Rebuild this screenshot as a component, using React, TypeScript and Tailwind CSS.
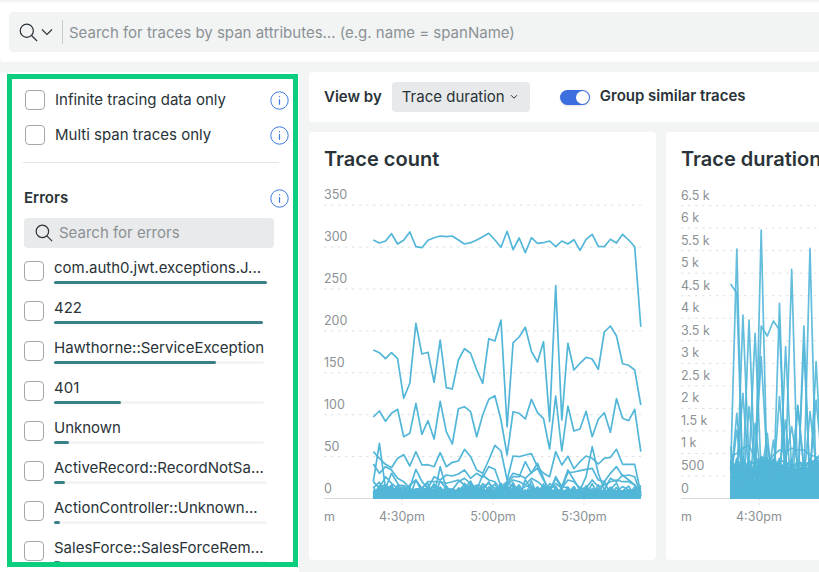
import {ReactNode} from 'react';

const LINE = '#52b6d8';

// deterministic noise so the low chart lines never change between runs
function makeRandom(seed: number) {
    let s = seed;
    return () => {
        s = (s * 1664525 + 1013904223) % 4294967296;
        return s / 4294967296;
    };
}

const COUNT_X0 = 373.3;
const COUNT_STEP = 6.08;

const countTop = [180, 189, 183, 161, 192, 181, 156, 200, 203, 181, 173, 168, 170, 168, 180, 192, 188, 180, 170, 160, 180, 202, 154, 209, 174, 218, 173, 190, 188, 183, 200, 183, 192, 179, 211, 178, 163, 199, 200, 178, 189, 163, 180, 200, 440];
const countSecond = [510, 518, 536, 518, 536, 655, 610, 430, 522, 517, 607, 480, 623, 627, 540, 506, 520, 570, 610, 476, 483, 420, 740, 488, 471, 442, 514, 546, 485, 725, 317, 720, 490, 570, 550, 532, 537, 568, 456, 438, 468, 551, 556, 570, 675];
const countThird = [711, 693, 724, 700, 688, 770, 760, 670, 763, 722, 777, 664, 755, 792, 686, 680, 695, 770, 705, 658, 647, 720, 825, 695, 700, 717, 658, 698, 716, 807, 648, 813, 678, 753, 747, 694, 770, 718, 698, 757, 656, 715, 722, 688, 815];
const countFourth = [815, 835, 853, 863, 835, 824, 858, 815, 855, 854, 860, 818, 860, 847, 843, 808, 830, 870, 880, 840, 796, 813, 900, 828, 830, 825, 821, 860, 880, 890, 815, 855, 829, 866, 845, 828, 835, 852, 835, 832, 808, 853, 853, 853, 940];
const countFifth = [852, 880, 860, 870, 895, 905, 925, 868, 905, 925, 890, 900, 885, 888, 882, 870, 895, 880, 892, 860, 868, 920, 905, 880, 885, 895, 878, 865, 900, 930, 895, 925, 878, 876, 872, 868, 865, 900, 905, 880, 860, 888, 885, 890, 945];
const countSpikes = [905, 790, 925, 880, 910, 940, 950, 900, 935, 920, 945, 860, 925, 930, 905, 895, 910, 930, 885, 900, 905, 930, 910, 890, 890, 845, 880, 850, 895, 940, 890, 920, 870, 900, 930, 890, 800, 880, 930, 895, 905, 885, 900, 915, 940];
const countLow = [905, 925, 890, 910, 925, 935, 915, 900, 925, 905, 905, 905, 910, 905, 900, 915, 925, 915, 920, 910, 925, 930, 915, 900, 905, 915, 895, 905, 920, 930, 910, 925, 900, 905, 925, 925, 900, 920, 915, 905, 900, 905, 905, 915, 950];

function countPoints(values: number[]) {
    return values.map((y, i) => `${(COUNT_X0 + i * COUNT_STEP).toFixed(1)},${(180 + y / 3).toFixed(1)}`).join(' ');
}

const countNoise = (() => {
    const rand = makeRandom(11);
    return Array.from({length: 30}, (_, n) => {
        const high = 15 - n * 0.35;
        return Array.from({length: 45}, (_, i) => {
            const x = COUNT_X0 + i * COUNT_STEP;
            const y = 497 - rand() * rand() * high * 1.3;
            return `${x.toFixed(1)},${y.toFixed(1)}`;
        }).join(' ');
    });
})();

const DURATION_X0 = 730.7;
const DURATION_STEP = 6.1;

function durationPoints(values: number[]) {
    return values.map((y, i) => `${(DURATION_X0 + i * DURATION_STEP).toFixed(1)},${(140 + y / 3).toFixed(1)}`).join(' ');
}

const durationSpikes: [number, number][] = [
    [1, 327], [2, 525], [3, 540], [4, 580], [5, 270], [8, 490], [9, 620], [10, 388], [12, 558], [13, 325], [14, 665], [15, 930],
    [1, 820], [2, 760], [3, 800], [5, 650], [6, 880], [8, 770], [9, 840], [10, 860], [11, 800], [12, 620], [13, 815], [11, 795], [14, 780],
    [0, 920], [1, 870], [4, 850], [7, 900], [6, 910],
];

const durationLines = (() => {
    const rand = makeRandom(29);
    const lines: number[][] = [];
    durationSpikes.forEach(([at, top]) => {
        lines.push(Array.from({length: 17}, (_, i) => (i === at ? top : 960 + rand() * 115)));
    });
    lines.push([432, 460, 1040, 980, 1050, 1000, 1020, 980, 1040, 1000, 1030, 1000, 1050, 1000, 1040, 1000, 1040]);
    lines.push([1040, 1000, 1050, 1020, 1000, 558, 588, 543, 570, 1000, 1040, 1000, 1020, 1040, 1000, 1030, 1040]);
    lines.push([950, 940, 925, 915, 955, 960, 975, 945, 930, 935, 925, 930, 930, 945, 950, 960, 950]);
    return lines;
})();

const durationNoise = (() => {
    const rand = makeRandom(53);
    return Array.from({length: 22}, () =>
        Array.from({length: 17}, () => 1075 - rand() * 125),
    );
})();

const countTicks = ['0', '50', '100', '150', '200', '250', '300', '350'];
const durationTicks = ['0', '500', '1 k', '1.5 k', '2 k', '2.5 k', '3 k', '3.5 k', '4 k', '4.5 k', '5 k', '5.5 k', '6 k', '6.5 k'];

function Axis({ticks, x0, x1, step, times}: {
    ticks: string[],
    x0: number,
    x1: number,
    step: number,
    times: [string, number][]
}) {
    return (
        <g className="text-[12.5px]" fill="#8b9194">
            {ticks.map((t, i) => {
                const y = 498.5 - i * step;
                return (
                    <g key={t}>
                        {i > 0 && <line x1={x0} x2={x1} y1={y} y2={y} stroke="#dedfe0" strokeDasharray="2.5 4.5"/>}
                        <text x={x0} y={y - 6}>{t}</text>
                    </g>
                );
            })}
            <line x1={x0} x2={x1} y1={498.5} y2={498.5} stroke="#d9dadb"/>
            <text x={x0} y={521}>m</text>
            {times.map(([label, x]) => (
                <g key={label}>
                    <line x1={x} x2={x} y1={499} y2={505} stroke="#dedfe0" strokeDasharray="2 2"/>
                    <text x={x} y={521} textAnchor="middle">{label}</text>
                </g>
            ))}
        </g>
    );
}

function CountChart() {
    return (
        <svg viewBox="309 180 347 350" className="block h-[350px] w-[347px]">
            <Axis ticks={countTicks} x0={324} x1={641} step={41.9}
                  times={[['4:30pm', 402], ['5:00pm', 493], ['5:30pm', 584]]}/>
            <g fill="none" stroke={LINE} strokeWidth="1.7" strokeLinejoin="round">
                {[countTop, countSecond, countThird, countFourth, countFifth, countSpikes, countLow].map((values, i) => (
                    <polyline key={i} points={countPoints(values)}/>
                ))}
                {countNoise.map((points, i) => (
                    <polyline key={i} points={points}/>
                ))}
            </g>
            <rect x={373} y={490} width={268} height={9} fill={LINE}/>
        </svg>
    );
}

function DurationChart() {
    return (
        <svg viewBox="666 180 347 350" className="block h-[350px] w-[347px]">
            <Axis ticks={durationTicks} x0={681} x1={1000} step={22.53} times={[['4:30pm', 759]]}/>
            <g fill="none" stroke={LINE} strokeWidth="1.7" strokeLinejoin="round">
                {durationLines.map((values, i) => (
                    <polyline key={i} points={durationPoints(values)} opacity={0.9}/>
                ))}
                {durationNoise.map((values, i) => (
                    <polyline key={i} points={durationPoints(values)}/>
                ))}
            </g>
            <rect x={730} y={482} width={110} height={17} fill={LINE}/>
        </svg>
    );
}

function SearchIcon({className}: { className: string }) {
    return (
        <svg viewBox="0 0 20 20" fill="none" stroke="#293338" strokeWidth="1.3" className={className}>
            <circle cx="8.2" cy="8.2" r="6.9"/>
            <path d="M13.2 13.2 19 19"/>
        </svg>
    );
}

function InfoIcon() {
    return (
        <svg viewBox="0 0 19 19" fill="none" stroke="#3b78e0" className="h-[19px] w-[19px] shrink-0">
            <circle cx="9.5" cy="9.5" r="8.7"/>
            <path d="M9.5 8.2v5.6" strokeWidth="1.2"/>
            <path d="M9.5 5.2v1.2" strokeWidth="1.2"/>
        </svg>
    );
}

function Box({className = ''}: { className?: string }) {
    return <span className={`block h-5 w-5 shrink-0 rounded-[4px] border border-[#a3a7a9] bg-white ${className}`}/>;
}

function OptionRow({children}: { children: ReactNode }) {
    return (
        <div className="flex h-5 items-center">
            <Box/>
            <span className="ml-[10px] w-[215px] text-[15px] text-[#293338]">{children}</span>
            <InfoIcon/>
        </div>
    );
}

const errorRows = [
    {name: 'com.auth0.jwt.exceptions.J...', track: 213, fill: 213},
    {name: '422', track: 209, fill: 209},
    {name: 'Hawthorne::ServiceException', track: 210, fill: 162},
    {name: '401', track: 210, fill: 67},
    {name: 'Unknown', track: 210, fill: 15},
    {name: 'ActiveRecord::RecordNotSa...', track: 213, fill: 11},
    {name: 'ActionController::Unknown...', track: 213, fill: 6},
    {name: 'SalesForce::SalesForceRem...', track: 213, fill: 6},
];

function Sidebar() {
    return (
        <aside className="mt-[2px] ml-[7px] h-[493px] w-[291px] overflow-hidden border-[5px] border-[#0bce7f] pl-3">
            <div className="flex flex-col gap-[15px] pt-[11px] pl-px">
                <OptionRow>Infinite tracing data only</OptionRow>
                <OptionRow>Multi span traces only</OptionRow>
            </div>
            <div className="mt-[17px] ml-[-1px] h-px w-[256px] bg-[#e3e4e5]"/>
            <div className="mt-[25px] flex h-5 w-[265px] items-center justify-between">
                <span className="text-[15px] leading-5 font-semibold text-[#293338]">Errors</span>
                <InfoIcon/>
            </div>
            <div className="mt-[10px] flex h-[30px] w-[250px] items-center rounded bg-[#e9eaeb] pl-[11px]">
                <SearchIcon className="h-[18px] w-[18px]"/>
                <span className="ml-[6px] text-[15px] text-[#8b9194]">Search for errors</span>
            </div>
            <div className="mt-[13px] flex flex-col gap-[17px]">
                {errorRows.map((row) => (
                    <div key={row.name} className="flex h-[23px] items-start">
                        <Box/>
                        <div className="ml-[10px]">
                            <div className="h-5 text-[15px] leading-[14px] whitespace-nowrap text-[#293338]">{row.name}</div>
                            <div className="h-[3px] rounded-full bg-[#f3f4f4]" style={{width: row.track}}>
                                <div className="h-[3px] rounded-full bg-[#3a7f88]" style={{width: row.fill}}/>
                            </div>
                        </div>
                    </div>
                ))}
            </div>
        </aside>
    );
}

function Card({title, children}: { title: string, children: ReactNode }) {
    return (
        <section className="h-[428px] w-[347px] shrink-0 rounded bg-white">
            <h2 className="h-[48px] pt-[14px] pl-[15px] text-[20px] leading-[26px] font-semibold whitespace-nowrap text-[#293338]">{title}</h2>
            {children}
        </section>
    );
}

export default function App() {
    return (
        <div className="h-[572px] w-[819px] overflow-hidden bg-[#f3f4f4] pt-[2px] font-['Inter',sans-serif] antialiased">
            <header className="h-[60px] rounded-b bg-white pt-[10px] pl-[9px]">
                <div className="flex h-10 items-center rounded-l bg-[#f2f4f4] pl-[10px]">
                    <SearchIcon className="h-[19px] w-[19px]"/>
                    <svg viewBox="0 0 12 8" fill="none" stroke="#293338" strokeWidth="1.1" className="ml-[3px] h-2 w-3">
                        <path d="M1 1.5 6 6.5 11 1.5"/>
                    </svg>
                    <span className="ml-[9px] h-6 w-px bg-[#c9cccd]"/>
                    <span className="ml-[6px] pt-[2px] text-[15px] whitespace-nowrap text-[#8b9194]">
                        Search for traces by span attributes... (e.g. name = spanName)
                    </span>
                </div>
            </header>
            <div className="mt-[10px] flex">
                <div className="h-[500px] w-[299px] shrink-0 rounded-tl bg-white">
                    <Sidebar/>
                </div>
                <main className="ml-[10px] min-w-0 flex-1">
                    <div className="flex h-[50px] w-[600px] items-center rounded bg-white pl-[15px]">
                        <span className="text-[15px] font-semibold text-[#293338]">View by</span>
                        <div className="ml-[10px] flex h-[30px] w-[138px] items-center rounded bg-[#e8e9ea] pl-[10px] text-[15px] text-[#293338]">
                            Trace duration
                            <svg viewBox="0 0 8 6" fill="none" stroke="#293338" className="ml-[5px] h-[6px] w-2">
                                <path d="M1 1.2 4 4.2 7 1.2"/>
                            </svg>
                        </div>
                        <span className="ml-[30px] flex h-[15px] w-[30px] items-center justify-end rounded-full bg-[#3b6fe0] pr-px shadow-sm">
                            <span className="h-[13px] w-[13px] rounded-full bg-white"/>
                        </span>
                        <span className="ml-[10px] pb-[2px] text-[15px] font-semibold text-[#293338]">Group similar traces</span>
                    </div>
                    <div className="mt-[10px] flex gap-[10px]">
                        <Card title="Trace count"><CountChart/></Card>
                        <Card title="Trace duration"><DurationChart/></Card>
                    </div>
                </main>
            </div>
        </div>
    );
}
